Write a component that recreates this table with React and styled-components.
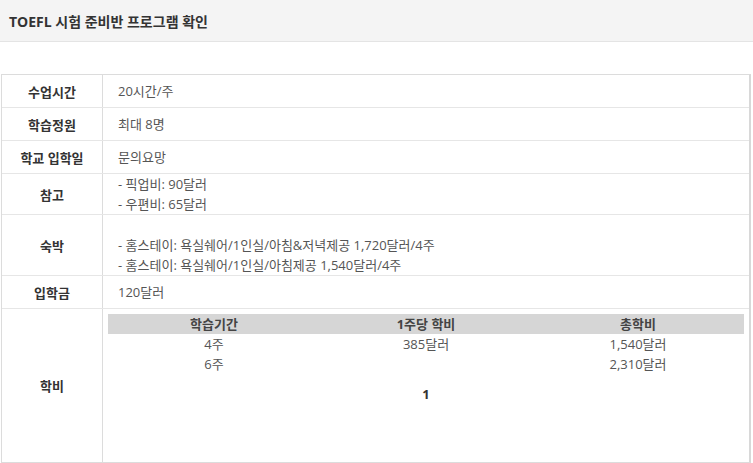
import React from "react";
import styled, { createGlobalStyle } from "styled-components";

const GlobalStyle = createGlobalStyle`
  body {
    margin: 0;
    background: #fff;
    font-family: "Open Sans", "Noto Sans CJK KR", sans-serif;
    font-size: 13px;
    color: #555;
  }
`;

const TitleBar = styled.header`
  height: 41px;
  display: flex;
  align-items: center;
  padding-left: 9px;
  background: #f4f4f4;
  border-bottom: 1px solid #e4e4e4;
  font-size: 14px;
  font-weight: bold;
  color: #333;
`;

const InfoTable = styled.div`
  margin: 32px 2px 0 1px;
  border: 1px solid #dcdcdc;
  border-right: 2px solid #d8d8d8;
`;

const Row = styled.div`
  display: grid;
  grid-template-columns: 101px 1fr;
  border-bottom: 1px solid #e6e6e6;
  &:last-child {
    border-bottom: none;
  }
`;

const Label = styled.div`
  display: flex;
  align-items: center;
  justify-content: center;
  border-right: 1px solid #dcdcdc;
  font-weight: bold;
  color: #333;
`;

const Value = styled.div`
  min-height: 32px;
  padding: 0 15px;
  display: flex;
  flex-direction: column;
  justify-content: center;
  line-height: 20px;
  color: #555;
`;

const FeeCell = styled.div`
  min-height: 143px;
  padding: 5px;
`;

const FeeGrid = styled.div`
  display: grid;
  grid-template-columns: repeat(3, 1fr);
  line-height: 20px;
  text-align: center;
`;

const FeeHead = styled.div`
  background: #d6d6d6;
  font-weight: bold;
  color: #444;
`;

const FeeData = styled.div`
  color: #555;
`;

const Pager = styled.div`
  margin-top: 10px;
  line-height: 20px;
  text-align: center;
  font-weight: bold;
  color: #333;
`;

const rows = [
  { label: "수업시간", lines: ["20시간/주"] },
  { label: "학습정원", lines: ["최대 8명"] },
  { label: "학교 입학일", lines: ["문의요망"] },
  { label: "참고", lines: ["- 픽업비: 90달러", "- 우편비: 65달러"] },
  {
    label: "숙박",
    lines: [
      "\u00a0",
      "- 홈스테이: 욕실쉐어/1인실/아침&저녁제공 1,720달러/4주",
      "- 홈스테이: 욕실쉐어/1인실/아침제공 1,540달러/4주",
    ],
  },
  { label: "입학금", lines: ["120달러"] },
];

const fees = [
  ["4주", "385달러", "1,540달러"],
  ["6주", "", "2,310달러"],
];

export default function App() {
  return (
    <>
      <GlobalStyle />
      <TitleBar>TOEFL 시험 준비반 프로그램 확인</TitleBar>
      <InfoTable>
        {rows.map((r) => (
          <Row key={r.label}>
            <Label>{r.label}</Label>
            <Value>
              {r.lines.map((l, i) => (
                <div key={i}>{l}</div>
              ))}
            </Value>
          </Row>
        ))}
        <Row>
          <Label>학비</Label>
          <FeeCell>
            <FeeGrid>
              <FeeHead>학습기간</FeeHead>
              <FeeHead>1주당 학비</FeeHead>
              <FeeHead>총학비</FeeHead>
              {fees.map((f) =>
                f.map((c, i) => <FeeData key={f[0] + i}>{c || "\u00a0"}</FeeData>)
              )}
            </FeeGrid>
            <Pager>1</Pager>
          </FeeCell>
        </Row>
      </InfoTable>
    </>
  );
}
